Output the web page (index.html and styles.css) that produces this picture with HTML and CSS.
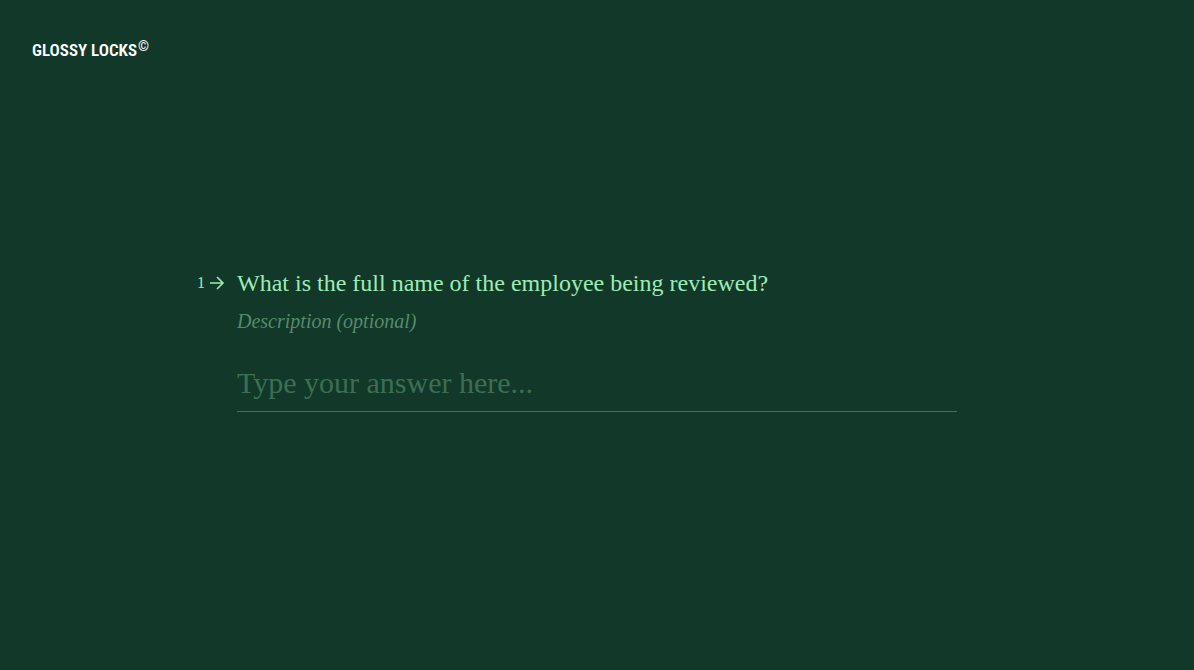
FILE: index.html
```html
<!DOCTYPE html>
<html lang="en">
<head>
  <meta charset="UTF-8">
  <meta name="viewport" content="width=device-width, initial-scale=1.0">
  <title>Glossy Locks</title>
  <link rel="stylesheet" href="styles.css">
</head>
<body>

  <header class="header">
    <div class="logo">GLOSSY LOCKS<span class="logo-mark">©</span></div>
  </header>

  <main class="main">
    <form class="question">
      <div class="question-head">
        <div class="question-number">
          <span>1</span>
          <svg class="arrow" width="16" height="14" viewBox="0 0 16 14" fill="none" aria-hidden="true">
            <path d="M1 7h13M8 1l6 6-6 6" stroke="currentColor" stroke-width="1.600"/>
          </svg>
        </div>
        <label class="question-title" for="answer">What is the full name of the employee being reviewed?</label>
      </div>
      <p class="description" id="description">Description (optional)</p>
      <input class="answer" type="text" id="answer" name="answer" placeholder="Type your answer here..." aria-describedby="description">
    </form>
  </main>

</body>
</html>
```

FILE: styles.css
```css
* {
  box-sizing: border-box;
}

body {
  margin: 0;
  min-height: 100vh;
  display: flex;
  flex-direction: column;
  background-color: #123829;
  color: #9eebb3;
  font-family: "Liberation Serif", serif;
}

.header {
  padding: 36px 32px 0;
}

.logo {
  display: flex;
  align-items: flex-start;
  gap: 1px;
  color: #fff;
  font-family: "Roboto Condensed", Roboto, sans-serif;
  font-size: 17px;
  font-weight: 600;
  line-height: 28px;
}

.logo-mark {
  font-size: 14px;
  font-weight: normal;
  line-height: 20px;
}

.main {
  flex: 1;
  display: flex;
  align-items: center;
  justify-content: center;
  padding: 0 80px 56px;
}

.question {
  width: 100%;
  max-width: 720px;
}

.question-head {
  display: flex;
  align-items: center;
  margin-left: -40px;
}

.question-number {
  flex: none;
  width: 40px;
  display: flex;
  align-items: center;
  gap: 4px;
  font-size: 16px;
}

.question-title {
  font-size: 24px;
  line-height: 32px;
}

.description {
  margin: 8px 0 0;
  color: #568b6b;
  font-size: 20px;
  font-style: italic;
  line-height: 28px;
}

.answer {
  display: block;
  width: 100%;
  margin-top: 28px;
  padding: 0 0 8px;
  border: none;
  border-bottom: 1px solid #467058;
  border-radius: 0;
  outline: none;
  background: none;
  color: #9eebb3;
  font-family: inherit;
  font-size: 30px;
  line-height: 40px;
}

.answer::placeholder {
  color: #3d6e53;
  opacity: 1;
}

.answer:focus {
  border-bottom-color: #9eebb3;
}
```
